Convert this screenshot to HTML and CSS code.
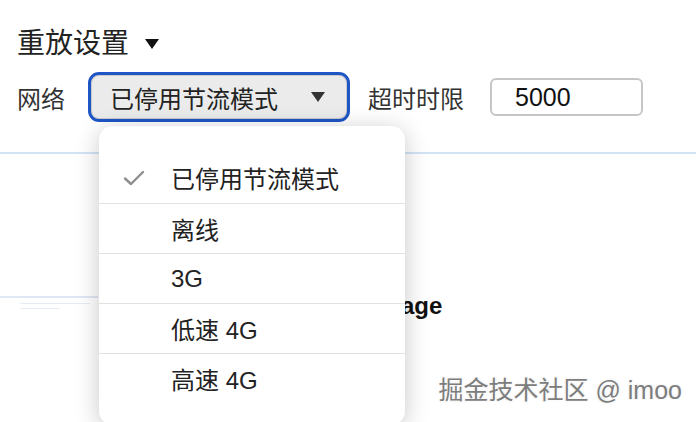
FILE: index.html
```html
<!DOCTYPE html>
<html lang="zh-CN">
<head>
  <meta charset="UTF-8">
  <title>重放设置</title>
  <link rel="stylesheet" href="styles.css">
</head>
<body>
  <!-- 设置区 -->
  <div class="settings">
    <div class="title">重放设置 <span class="caret"></span></div>
    <div class="row">
      <span class="label">网络</span>
      <div class="select">
        <span>已停用节流模式</span>
        <span class="caret small"></span>
      </div>
      <span class="label timeout">超时时限</span>
      <div class="input">5000</div>
    </div>
  </div>
  <div class="divider"></div>

  <!-- 下面的页面内容 -->
  <div class="content">
    <div class="thumb">
      <div class="thumb-bar"></div>
      <div class="thumb-line"></div>
      <div class="thumb-line short"></div>
    </div>
    <h2 class="heading">Page</h2>
  </div>

  <!-- 下拉菜单 -->
  <ul class="menu">
    <li><span class="check"><svg width="22" height="16" viewBox="0 0 22 16"><path d="M2 8.5 L8 14 L20 2" fill="none" stroke="#8e8e8e" stroke-width="2.4" stroke-linecap="round" stroke-linejoin="round"/></svg></span>已停用节流模式</li>
    <li><span class="check"></span>离线</li>
    <li><span class="check"></span>3G</li>
    <li><span class="check"></span>低速 4G</li>
    <li><span class="check"></span>高速 4G</li>
  </ul>

  <div class="watermark">掘金技术社区 @ imoo</div>
</body>
</html>
```

FILE: styles.css
```css
body {
  margin: 0;
  background: #fff;
  color: #222;
  font-family: "Liberation Sans", "Noto Sans CJK SC", sans-serif;
  overflow: hidden;
  height: 422px;
}
.settings {
  padding: 26px 17px 0;
}
.title {
  font-size: 28px;
  line-height: 36px;
  height: 36px;
  display: flex;
  align-items: center;
}
.caret {
  display: inline-block;
  width: 0;
  height: 0;
  margin-left: 16px;
  border-left: 7px solid transparent;
  border-right: 7px solid transparent;
  border-top: 10px solid #111;
}
.caret.small {
  margin-left: auto;
  border-top-color: #333;
}
.row {
  display: flex;
  align-items: center;
  margin-top: 10px;
  height: 50px;
}
.label {
  font-size: 24px;
  color: #333;
}
.select {
  box-sizing: border-box;
  width: 262px;
  height: 50px;
  margin-left: 23px;
  border: 3px solid #1e56c6;
  border-radius: 11px;
  background: #ebebeb;
  box-shadow: inset 0 0 0 1px #c9c9c9;
  display: flex;
  align-items: center;
  padding: 0 22px 0 19px;
  font-size: 24px;
  color: #222;
}
.timeout {
  margin-left: 18px;
}
.input {
  box-sizing: border-box;
  width: 153px;
  height: 38px;
  margin-left: 26px;
  border: 2px solid #c6c6c6;
  border-radius: 6px;
  padding-left: 23px;
  font-size: 25px;
  line-height: 34px;
  color: #111;
}
.divider {
  margin-top: 30px;
  height: 2px;
  background: #d3e3f6;
}
.content {
  display: flex;
  align-items: center;
  margin-top: 138px;
}
.thumb {
  width: 98px;
  height: 20px;
  opacity: 0.45;
}
.thumb-bar {
  height: 2px;
  background: #b9cde8;
  margin-bottom: 5px;
}
.thumb-line {
  height: 1px;
  width: 70px;
  margin: 0 0 4px 20px;
  background: #c9d6e6;
}
.thumb-line.short {
  width: 40px;
}
.heading {
  margin: 0 0 0 287px;
  font-size: 24px;
  font-weight: bold;
  color: #111;
}
.menu {
  position: absolute;
  left: 99px;
  top: 126px;
  width: 306px;
  margin: 0;
  padding: 26px 0 22px;
  list-style: none;
  background: #fff;
  border-radius: 14px;
  box-shadow: 0 4px 24px rgba(0, 0, 0, 0.22);
}
.menu li {
  display: flex;
  align-items: center;
  height: 49px;
  padding-left: 24px;
  border-bottom: 1px solid #e2e2e2;
  font-size: 24px;
  color: #222;
}
.menu li:first-child {
  height: 51px;
}
.menu li:last-child {
  border-bottom: none;
}
.check {
  width: 48px;
  display: flex;
  align-items: center;
}
.watermark {
  position: absolute;
  right: 14px;
  bottom: 16px;
  font-size: 25px;
  color: #7d7d7d;
  text-shadow: 1px 1px 0 rgba(255, 255, 255, 0.9), -1px -1px 0 rgba(255, 255, 255, 0.7), 0 0 2px rgba(0, 0, 0, 0.25);
}
```
